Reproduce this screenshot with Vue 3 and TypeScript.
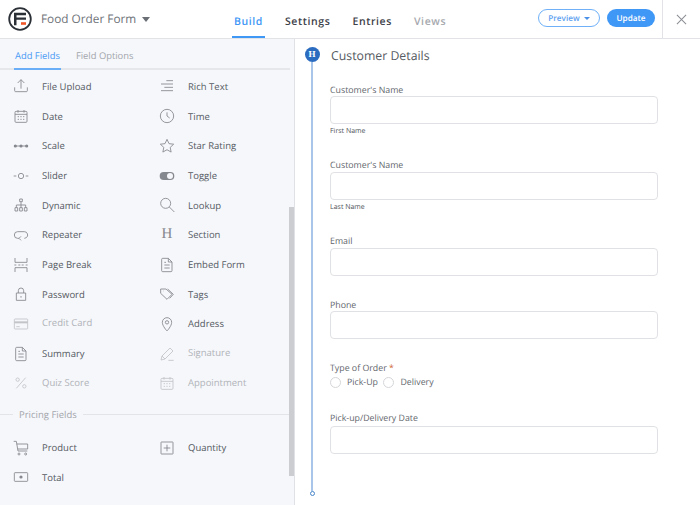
<script setup lang="ts">
// Food Order form builder: field palette on the left, form preview on the right
interface PaletteItem {
  label: string;
  icon: string;
  off?: boolean;
}

const icons: Record<string, string> = {
  upload: "M2.500 14v5a1.500 1.500 0 0 0 1.500 1.500h16a1.500 1.500 0 0 0 1.500-1.500v-5M12 16V2.500M7 7.500l5-5 5 5",
  rich: "M11 4h10M3 9h18M8 14h13M3 19h18",
  date: "M4.500 5h15A1.500 1.500 0 0 1 21 6.500V20a1.500 1.500 0 0 1-1.500 1.500h-15A1.500 1.500 0 0 1 3 20V6.500A1.500 1.500 0 0 1 4.500 5ZM7.500 3v4M16.500 3v4M3 9.500h18M7 13h2M11 13h2M15 13h2M7 17h2M11 17h2M15 17h2",
  time: "M12 2a10 10 0 1 0 0 20 10 10 0 0 0 0-20ZM12 6.500V12l4 3",
  scale: "M2 12h20",
  slider: "M1 12h4M19 12h4M12 8a4 4 0 1 0 0 8 4 4 0 0 0 0-8Z",
  star: "m12 2 3 6.500 7 .8-5.200 4.800 1.400 7L12 17.600l-6.200 3.500 1.400-7L2 9.300l7-.8Z",
  dynamic: "M10 3h4v4h-4ZM12 7v5M5 16v-4h14v4M12 12v4M3 16h4v5H3ZM10 16h4v5h-4ZM17 16h4v5h-4Z",
  lookup: "M10 2a7.500 7.500 0 1 0 0 15 7.500 7.500 0 0 0 0-15ZM15.500 15 23 22.500",
  repeater: "M9 17H7a5 5 0 0 1 0-10h10a5 5 0 0 1 3 9l-3 1M12 14l-3 3 3 3",
  pagebreak: "M3 1.500V8h18V1.500M3 22.500V16h18v6.500M2 12h3M8 12h3M13 12h3M19 12h3",
  embed: "M5.500 2H14l5.500 5.500V20.500a1.500 1.500 0 0 1-1.500 1.500H5.500A1.500 1.500 0 0 1 4 20.500V3.500A1.500 1.500 0 0 1 5.500 2ZM14 2v5.500h5.500M8 12h8M8 16.500h8M8 8h2.500",
  tags: "M2.500 4.500h8l9 8-7.500 7.500-9.500-9ZM6.500 7.500h.5M13 4.500l8.500 8-5.500 6",
  lock: "M5 10.500h14v11H5ZM8 10.500V7a4 4 0 0 1 8 0v3.500M12 15v2.500",
  card: "M3 4.500h18a1 1 0 0 1 1 1v13a1 1 0 0 1-1 1H3a1 1 0 0 1-1-1v-13a1 1 0 0 1 1-1ZM5 16h5",
  pin: "M12 22.500s7-7.500 7-13a7 7 0 0 0-14 0c0 5.500 7 13 7 13ZM12 7a2.500 2.500 0 1 0 0 5 2.500 2.500 0 0 0 0-5Z",
  pen: "M3 21l1.500-6L16.500 3l4.500 4.500L9 19.500ZM4.500 15 9 19.500M14 21.500h8",
  percent: "M19 4 5 20M7 4.500a2.500 2.500 0 1 0 0 5 2.500 2.500 0 0 0 0-5ZM17 14.500a2.500 2.500 0 1 0 0 5 2.500 2.500 0 0 0 0-5Z",
  cart: "M1 2h4l2.500 14.500h14M5.600 6H22v7.500H7M9 19.500a1.500 1.500 0 1 0 0 3 1.500 1.500 0 0 0 0-3ZM19 19.500a1.500 1.500 0 1 0 0 3 1.500 1.500 0 0 0 0-3Z",
  plus: "M3.500 3h17a.5.5 0 0 1 .5.5v17a.5.5 0 0 1-.5.5h-17a.5.5 0 0 1-.5-.5v-17a.5.5 0 0 1 .5-.5ZM12 7v10M7 12h10",
  money: "M3 5.500h18a1 1 0 0 1 1 1v11a1 1 0 0 1-1 1H3a1 1 0 0 1-1-1v-11a1 1 0 0 1 1-1Z",
};

const fields: PaletteItem[] = [
  { label: "File Upload", icon: "upload" },
  { label: "Rich Text", icon: "rich" },
  { label: "Date", icon: "date" },
  { label: "Time", icon: "time" },
  { label: "Scale", icon: "scale" },
  { label: "Star Rating", icon: "star" },
  { label: "Slider", icon: "slider" },
  { label: "Toggle", icon: "toggle" },
  { label: "Dynamic", icon: "dynamic" },
  { label: "Lookup", icon: "lookup" },
  { label: "Repeater", icon: "repeater" },
  { label: "Section", icon: "section" },
  { label: "Page Break", icon: "pagebreak" },
  { label: "Embed Form", icon: "embed" },
  { label: "Password", icon: "lock" },
  { label: "Tags", icon: "tags" },
  { label: "Credit Card", icon: "card", off: true },
  { label: "Address", icon: "pin" },
  { label: "Summary", icon: "embed" },
  { label: "Signature", icon: "pen", off: true },
  { label: "Quiz Score", icon: "percent", off: true },
  { label: "Appointment", icon: "date", off: true },
];

const pricing: PaletteItem[] = [
  { label: "Product", icon: "cart" },
  { label: "Quantity", icon: "plus" },
  { label: "Total", icon: "money" },
];
</script>

<template>
  <div class="app">
    <header class="top">
      <div class="brand">
        <svg class="logo" viewBox="0 0 24 24" width="24" height="24">
          <circle cx="12" cy="12" r="10.800" fill="none" stroke="#2b2f36" stroke-width="1.800" />
          <path d="M6 5.800h12v2.400H8.500v2.300H18v2.300H8.500v5.400H6Z" fill="#2b2f36" />
          <rect x="13" y="15.200" width="5" height="2.600" fill="#f0562a" />
        </svg>
        <span class="form-name">Food Order Form</span>
        <i class="caret"></i>
      </div>
      <nav class="nav">
        <a class="on">Build</a>
        <a>Settings</a>
        <a>Entries</a>
        <a class="dim">Views</a>
      </nav>
      <div class="actions">
        <button class="btn ghost">Preview <i class="mini"></i></button>
        <button class="btn solid">Update</button>
      </div>
      <div class="close">
        <svg viewBox="0 0 12 12" width="11" height="11"><path d="M1 1l10 10M11 1 1 11" stroke="#8a8d93" stroke-width="1.100" fill="none" /></svg>
      </div>
    </header>

    <div class="body">
      <aside class="side">
        <div class="tabs">
          <span class="tab on">Add Fields</span>
          <span class="tab">Field Options</span>
        </div>
        <div class="grid">
          <div v-for="f in fields" :key="f.label" class="item" :class="{ off: f.off }">
            <span class="ico">
              <span v-if="f.icon === 'section'" class="h-ico">H</span>
              <svg v-else viewBox="0 0 24 24" width="16" height="16">
                <rect v-if="f.icon === 'toggle'" x="1" y="6" width="22" height="12" rx="6" fill="#85888e" />
                <circle v-if="f.icon === 'toggle'" cx="16.500" cy="12" r="4.500" fill="#f6f7fb" />
                <path v-if="icons[f.icon]" :d="icons[f.icon]" />
                <template v-if="f.icon === 'scale'">
                  <circle cx="3.500" cy="12" r="2.400" class="dot" />
                  <circle cx="12" cy="12" r="2.400" class="dot" />
                  <circle cx="20.500" cy="12" r="2.400" class="dot" />
                </template>
                <rect v-if="f.icon === 'card'" x="2" y="8" width="20" height="3" class="dot" />
              </svg>
            </span>
            <span class="txt">{{ f.label }}</span>
          </div>
        </div>
        <div class="group"><span>Pricing Fields</span></div>
        <div class="grid">
          <div v-for="f in pricing" :key="f.label" class="item">
            <span class="ico">
              <svg viewBox="0 0 24 24" width="16" height="16">
                <path :d="icons[f.icon]" />
                <circle v-if="f.icon === 'money'" cx="12" cy="12" r="2.400" class="dot" />
              </svg>
            </span>
            <span class="txt">{{ f.label }}</span>
          </div>
        </div>
        <div class="thumb"></div>
      </aside>

      <main class="main">
        <div class="rail">
          <span class="rail-h">H</span>
          <span class="rail-line"></span>
          <span class="rail-end"></span>
        </div>
        <form class="form" @submit.prevent>
          <h2 class="title">Customer Details</h2>
          <div class="field f1">
            <label>Customer's Name</label>
            <div class="box"></div>
            <small>First Name</small>
          </div>
          <div class="field f2">
            <label>Customer's Name</label>
            <div class="box"></div>
            <small>Last Name</small>
          </div>
          <div class="field f3">
            <label>Email</label>
            <div class="box"></div>
          </div>
          <div class="field f4">
            <label>Phone</label>
            <div class="box"></div>
          </div>
          <div class="field f5">
            <label>Type of Order <em>*</em></label>
            <div class="radios">
              <i class="radio"></i><span>Pick-Up</span>
              <i class="radio"></i><span>Delivery</span>
            </div>
          </div>
          <div class="field f6">
            <label>Pick-up/Delivery Date</label>
            <div class="box"></div>
          </div>
        </form>
      </main>
    </div>
  </div>
</template>

<style>
html, body { margin: 0; background: #fff; }
</style>

<style scoped>
.app { width: 700px; height: 505px; overflow: hidden; display: flex; flex-direction: column; font-family: "Open Sans", sans-serif; text-rendering: geometricPrecision; color: #555a62; }

.top { height: 38px; flex: none; display: flex; align-items: stretch; border-bottom: 1px solid #e2e3e6; }
.brand { width: 232px; flex: none; display: flex; align-items: center; padding-left: 8px; box-sizing: border-box; }
.logo { flex: none; }
.form-name { margin-left: 9px; font-size: 11.800px; color: #6e7278; }
.caret { margin-left: 6px; border: 4.500px solid transparent; border-top: 5px solid #6a6e75; border-bottom: 0; }
.nav { display: flex; gap: 18px; }
.nav a { padding: 0 2px; font-size: 10.500px; font-weight: 600; letter-spacing: 0.6px; line-height: 44px; color: #3d4148; }
.nav a.on { color: #3f97f6; box-shadow: inset 0 -2px 0 #3f97f6; }
.nav a.dim { color: #a5a8ad; }
.actions { margin-left: auto; display: flex; align-items: center; gap: 7px; padding-bottom: 2px; }
.btn { height: 18px; border-radius: 9px; font: 600 8.200px "Open Sans", sans-serif; padding: 0; box-sizing: border-box; text-rendering: geometricPrecision; }
.btn.ghost { width: 62px; background: #fff; border: 1px solid #6fb0f8; color: #5d9ff0; }
.btn.solid { width: 48px; background: #3f97f6; border: none; color: #fff; }
.mini { display: inline-block; vertical-align: middle; margin-left: 2px; border: 3px solid transparent; border-top: 3px solid #4a90e8; border-bottom: 0; }
.close { width: 37px; margin-left: 7px; flex: none; border-left: 1px solid #e2e3e6; display: flex; align-items: center; justify-content: center; }

.body { flex: 1; display: flex; min-height: 0; }
.side { position: relative; width: 295px; flex: none; box-sizing: border-box; background: #f6f7fb; border-right: 1px solid #e0e1e5; }
.tabs { height: 31px; width: 290px; box-sizing: border-box; padding-left: 14px; display: flex; gap: 14px; border-bottom: 2px solid #e6e7eb; }
.tab { font-size: 9.400px; line-height: 33px; height: 31px; box-sizing: border-box; color: #a3a6ac; padding: 0 1px; }
.tab.on { color: #4a9bf5; box-shadow: inset 0 -2px 0 #6aaef7; }
.grid { display: grid; grid-template-columns: 146px 146px; grid-auto-rows: 29.700px; padding: 1.600px 0 0 14px; }
.item { display: flex; align-items: center; font-size: 9.500px; color: #555a62; }
.item.off { color: #b0b3b8; }
.item.off .txt { margin-bottom: 2px; }
.ico { width: 28px; height: 16px; flex: none; display: flex; align-items: center; }
.ico svg { display: block; margin-left: -1px; fill: none; stroke: #85888e; stroke-width: 1.300; }
.item.off .ico svg { stroke: #c2c4c8; }
.dot { fill: #85888e; stroke: none; }
.item.off .dot { fill: #c2c4c8; }
.ico svg circle[fill], .ico svg rect[fill] { stroke: none; }
.h-ico { font: 15px "Liberation Serif", serif; color: #85888e; width: 14px; text-align: center; }
.group { width: 290px; height: 33px; display: flex; align-items: center; font-size: 9.500px; color: #a3a6ac; gap: 6px; box-sizing: border-box; }
.group::before { content: ""; width: 13px; height: 1px; background: #e3e4e8; }
.group::after { content: ""; flex: 1; height: 1px; background: #e3e4e8; }
.thumb { position: absolute; right: 0; top: 168px; width: 5px; height: 269px; background: #cbcdd1; }

.main { flex: 1; display: flex; min-width: 0; background: #fff; }
.rail { width: 34px; flex: none; display: flex; flex-direction: column; align-items: center; padding: 8px 0 9px; box-sizing: border-box; }
.rail-h { width: 15px; height: 15px; flex: none; border-radius: 50%; background: #2b6cc0; color: #fff; font: bold 9px/15px "Liberation Serif", serif; text-align: center; }
.rail-line { flex: 1; width: 2px; background: #a9c5ea; }
.rail-end { width: 5px; height: 5px; flex: none; box-sizing: border-box; border-radius: 50%; border: 1px solid #4a86c9; background: #fff; }
.form { width: 328px; margin-left: 1px; }
.title { margin: 8px 0 0 1px; font-size: 12.300px; font-weight: 400; line-height: 18px; color: #565a61; }
.field label { display: block; font-size: 8.800px; line-height: 12px; color: #62666c; }
.field em { font-style: normal; color: #d2703f; }
.box { height: 28px; box-sizing: border-box; border: 1px solid #e0e1e4; border-radius: 4px; background: #fff; }
.field small { display: block; margin-top: 2px; font-size: 7px; line-height: 12px; color: #50545a; }
.f1 { margin-top: 19px; }
.f2 { margin-top: 21px; }
.f2 .box, .f3 .box { margin-top: 1px; }
.f3 { margin-top: 21px; }
.f4 { margin-top: 23px; }
.f5 { margin-top: 23px; }
.f6 { margin-top: 22px; }
.f6 .box { margin-top: 2px; }
.radios { display: flex; align-items: center; font-size: 8.800px; line-height: 15px; color: #62666c; margin-top: 1px; }
.radio { width: 11px; height: 11px; box-sizing: border-box; border: 1px solid #d5d6d9; border-radius: 50%; flex: none; }
.radio + span { margin-left: 6px; margin-right: 5.500px; }
</style>
